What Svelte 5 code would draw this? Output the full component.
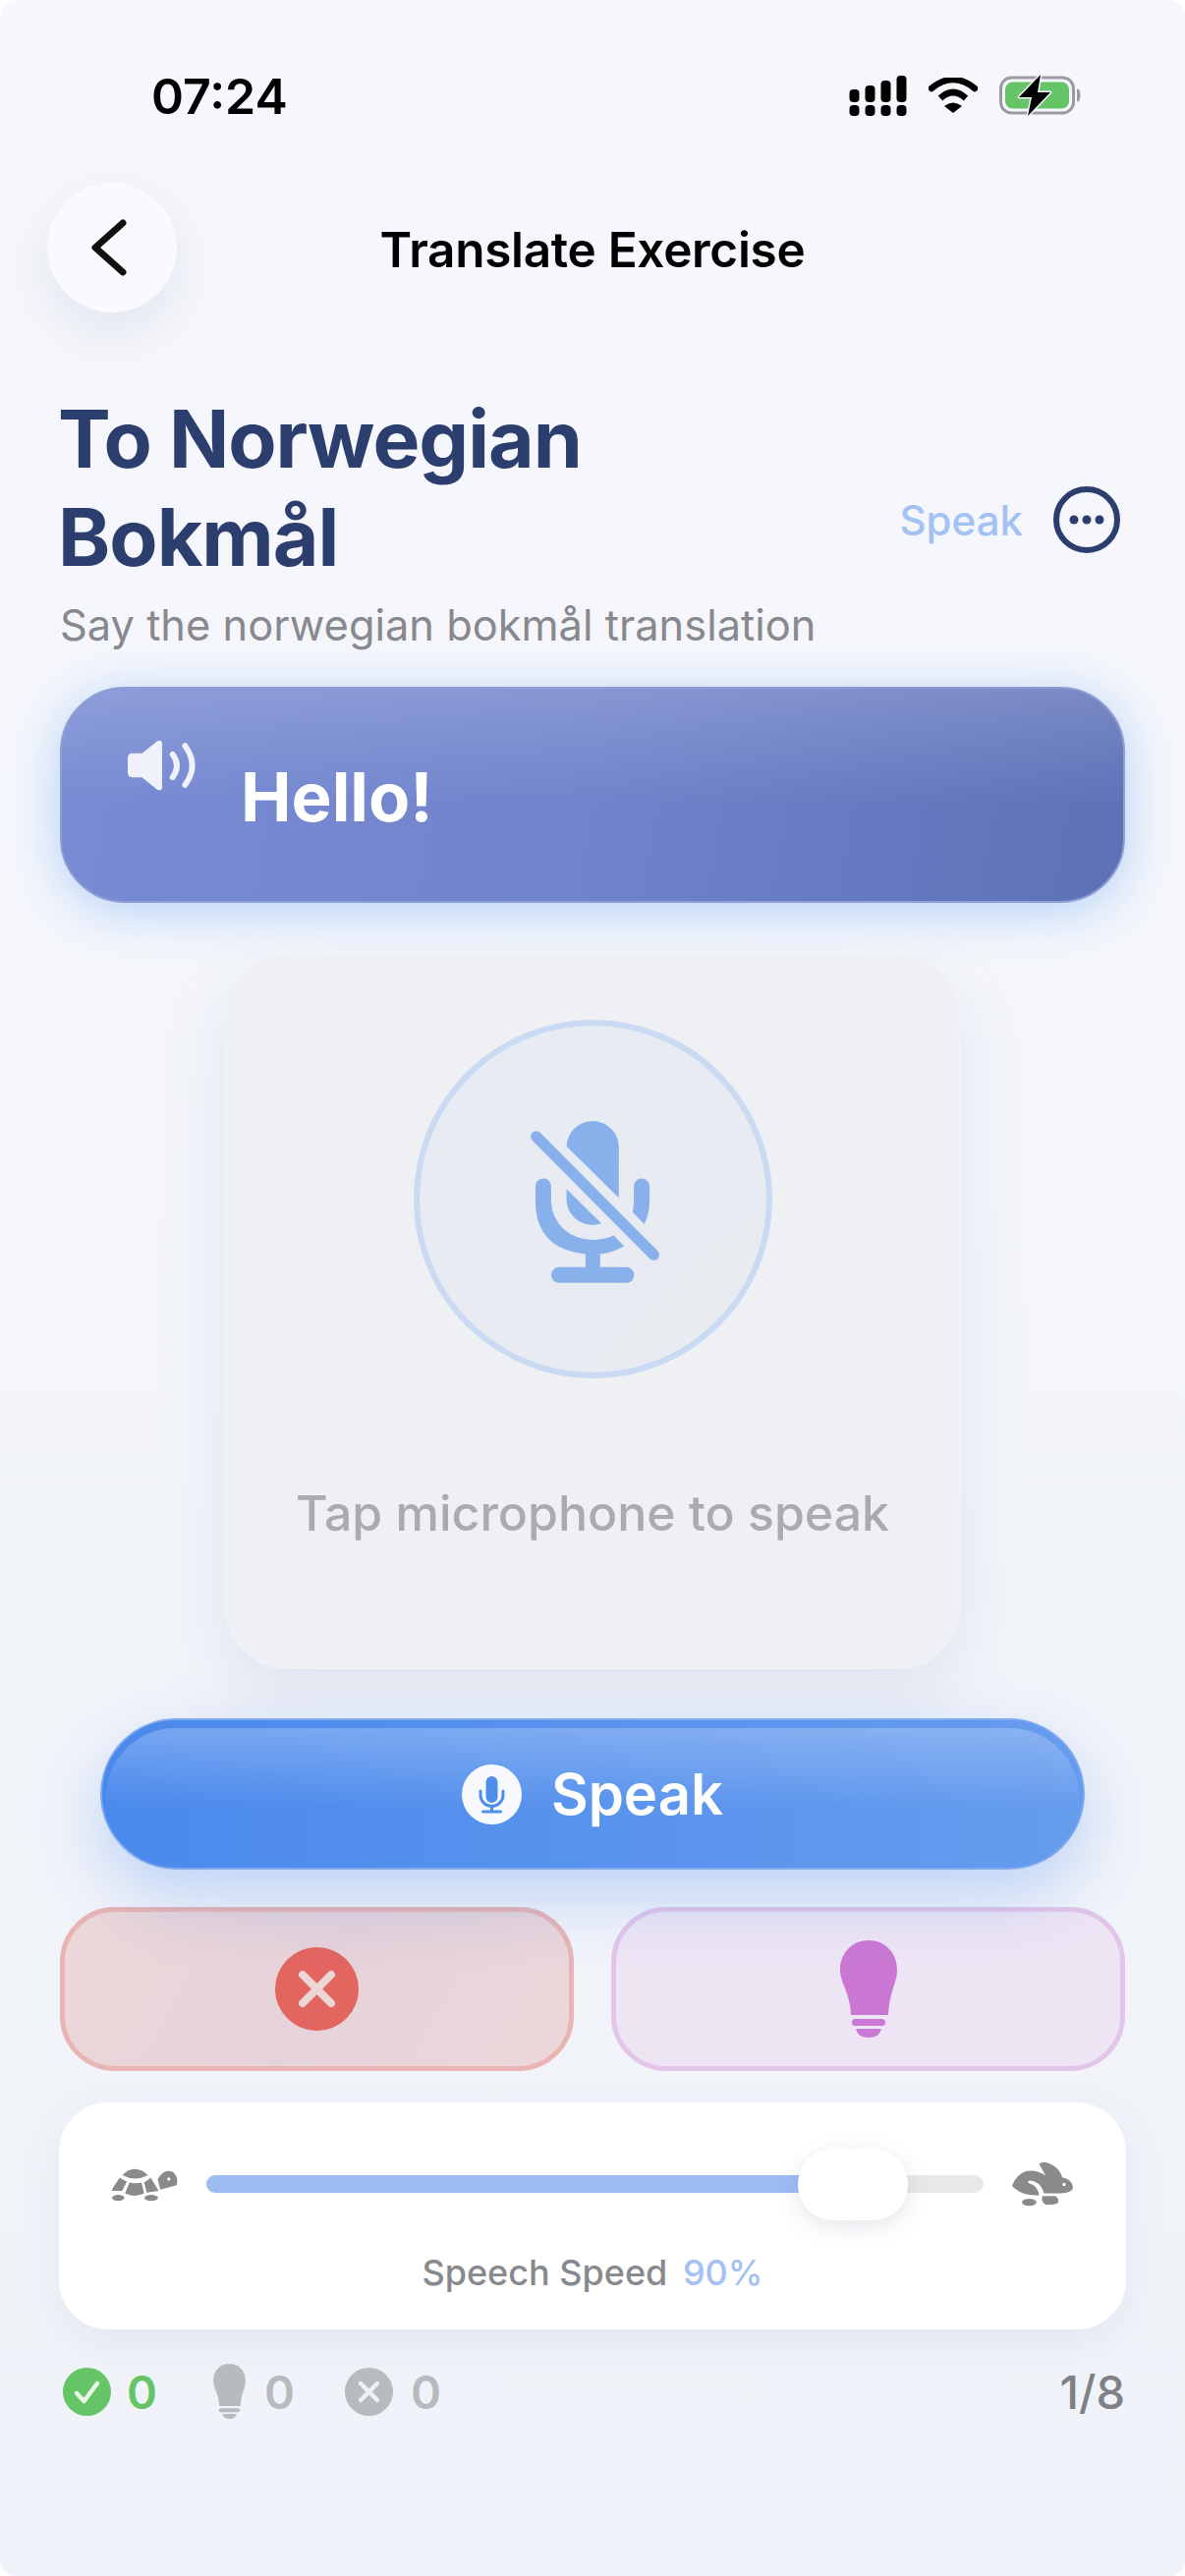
<script lang="ts">
	let speed = $state(90);
	const signalBars = [
		{ x: 0, y: 14, h: 13 },
		{ x: 16, y: 10, h: 17 },
		{ x: 32, y: 5, h: 22 },
		{ x: 48, y: 0, h: 27 }
	];
</script>

<div class="page">
	<div class="statusbar">
		<span class="time">07:24</span>
		<div class="status-icons">
			<svg width="59" height="41" viewBox="0 0 59 41" fill="#000">
				{#each signalBars as b}
					<rect x={b.x + 0.5} y={b.y} width="10" height={b.h} rx="4" />
					<rect x={b.x + 0.5} y="30" width="10" height="11" rx="4" />
				{/each}
			</svg>
			<svg width="50" height="37" viewBox="0 0 50 37">
				<path d="M3 11 Q25 -7 47 11" fill="none" stroke="#000" stroke-width="6.5" stroke-linecap="round" stroke-linejoin="round" />
				<path d="M12 21 Q25 9 38 21" fill="none" stroke="#000" stroke-width="6.5" />
				<path d="M25 36 L16 29 Q25 22 34 29 Z" fill="#000" />
			</svg>
			<svg width="83" height="42" viewBox="0 0 83 42">
				<rect x="1.5" y="3" width="74" height="36" rx="11" fill="none" stroke="#9a9a9f" stroke-width="3" />
				<rect x="6" y="7.5" width="65" height="27" rx="7.5" fill="#65c466" />
				<path d="M80 15 Q83 21 80 27 Z" fill="#9a9a9f" stroke="#9a9a9f" stroke-width="2" />
				<path d="M42 0 L20 23 H33 L29 42 L52 18 H39 Z" fill="#000" stroke="#f5f6fc" stroke-width="3" stroke-linejoin="round" paint-order="stroke" />
			</svg>
		</div>
	</div>

	<header class="topbar">
		<button class="back" aria-label="Back">
			<svg width="41" height="60" viewBox="0 0 41 60">
				<path d="M35 5 L7 30 L35 55" fill="none" stroke="#111" stroke-width="7" stroke-linecap="round" stroke-linejoin="round" />
			</svg>
		</button>
		<h1>Translate Exercise</h1>
	</header>

	<main class="content">
		<div class="title-row">
			<h2>To Norwegian<br />Bokmål</h2>
			<div class="title-actions">
				<span class="speak-link">Speak</span>
				<svg width="68" height="68" viewBox="0 0 68 68">
					<circle cx="34" cy="34" r="31" fill="none" stroke="#2c3e6d" stroke-width="6" />
					<circle cx="21" cy="34" r="4.5" fill="#2c3e6d" />
					<circle cx="34" cy="34" r="4.5" fill="#2c3e6d" />
					<circle cx="47" cy="34" r="4.5" fill="#2c3e6d" />
				</svg>
			</div>
		</div>
		<p class="subtitle">Say the norwegian bokmål translation</p>

		<div class="prompt">
			<svg class="speaker" width="70" height="53" viewBox="0 0 72 54" fill="#f0f2fb">
				<path d="M6 14 H16 L32 1 Q37 -1 37 4 V49 Q37 54 32 52 L16 39 H6 Q1 39 1 34 V19 Q1 14 6 14 Z" />
				<path d="M48 15 Q57 27 48 39" fill="none" stroke="#f0f2fb" stroke-width="6" stroke-linecap="round" />
				<path d="M61 6 Q76 27 61 47" fill="none" stroke="#f0f2fb" stroke-width="6" stroke-linecap="round" />
			</svg>
			<span class="prompt-text">Hello!</span>
		</div>

		<section class="mic-card">
			<div class="mic-circle">
				<svg width="133" height="166" viewBox="480 420 400 498" fill="#88b1ec">
					<path d="M590 497 A80 80 0 0 1 750 502 V655 Z" />
					<path d="M590 628 V660 A80 78 0 0 0 697 733 Z" />
					<path d="M495 619 A24 24 0 0 1 543 619 V665 A125 118 0 0 0 670 783 Q705 783 734 770 L766 802 Q735 822 693 827 V867 H773 A24 24 0 0 1 773 915 H567 A24 24 0 0 1 567 867 H648 V827 Q495 810 495 665 Z" />
					<path d="M796 619 A24 24 0 0 1 844 619 V665 Q844 702 828 735 L792 698 Q796 682 796 665 Z" />
					<line x1="497" y1="467" x2="857" y2="829" stroke="#88b1ec" stroke-width="34" stroke-linecap="round" />
				</svg>
			</div>
			<p class="mic-hint">Tap microphone to speak</p>
		</section>

		<button class="speak-btn">
			<svg width="61" height="61" viewBox="0 0 61 61">
				<circle cx="30.5" cy="30.5" r="30.5" fill="#f7f9fe" />
				<rect x="24.5" y="12" width="12" height="27" rx="6" fill="#4f8dea" />
				<path d="M19 27 V31 A11.5 11.5 0 0 0 42 31 V27" fill="none" stroke="#4f8dea" stroke-width="3" stroke-linecap="round" />
				<path d="M30.5 42 V47 M21.5 48 H39.5" fill="none" stroke="#4f8dea" stroke-width="3" stroke-linecap="round" />
			</svg>
			<span>Speak</span>
		</button>

		<div class="actions">
			<button class="action wrong" aria-label="Skip">
				<svg width="85" height="85" viewBox="0 0 85 85">
					<circle cx="42.5" cy="42.5" r="42.5" fill="#e2655f" />
					<path d="M28 28 L57 57 M57 28 L28 57" stroke="#ecd6d8" stroke-width="8" stroke-linecap="round" />
				</svg>
			</button>
			<button class="action hint" aria-label="Hint">
				<svg width="58" height="99" viewBox="0 0 58 99" fill="#cb78d4">
					<path d="M29 0 C46 0 58 13 58 30 C58 44 50 52 49 76 H11 C10 52 0 44 0 30 C0 13 12 0 29 0 Z" />
					<rect x="12" y="80" width="34" height="7" rx="3.5" />
					<path d="M16 90 H42 Q40 99 29 99 Q18 99 16 90 Z" />
				</svg>
			</button>
		</div>

		<section class="speed-card">
			<div class="speed-row">
				<svg class="turtle" width="68" height="35" viewBox="98 103 206 106" fill="#8a8a8d">
					<path d="M133 127 Q170 90 212 127 Q172 148 133 127 Z" />
					<path d="M125 135 Q135 142 147 147 L132 176 H100 Q100 170 125 135 Z" />
					<path d="M155 150 Q172 155 192 150 L200 183 Q170 198 141 183 Z" />
					<path d="M220 135 L245 176 L208 181 L200 149 Q212 144 220 135 Z" />
					<path d="M242 140 Q260 108 285 116 Q308 130 300 158 L250 172 Z" />
					<ellipse cx="120" cy="197" rx="19" ry="9" />
					<ellipse cx="222" cy="197" rx="21" ry="9" />
					<circle cx="276" cy="139" r="5" fill="#fff" />
				</svg>
				<div class="track">
					<div class="track-fill" style="width: {speed}%"></div>
					<div class="thumb" style="left: {speed}%"></div>
				</div>
				<svg class="rabbit" width="62" height="45" viewBox="153 88 185 134" fill="#8a8a8d">
					<path d="M153 160 Q165 125 195 115 Q225 108 255 128 L235 92 Q250 82 275 95 Q300 110 305 133 Q338 140 338 165 Q335 182 300 182 H250 Q240 145 205 143 Q195 150 215 155 Q232 165 235 188 Q190 190 165 170 Z" />
					<path d="M245 190 H285 Q298 200 292 212 Q280 218 255 216 Q240 208 245 190 Z" />
					<ellipse cx="205" cy="209" rx="22" ry="11" />
					<circle cx="311" cy="155" r="5" fill="#fff" />
				</svg>
			</div>
			<p class="speed-label">Speech Speed <span>{speed}%</span></p>
		</section>

		<footer class="stats">
			<div class="stat correct">
				<svg width="49" height="49" viewBox="0 0 49 49">
					<circle cx="24.5" cy="24.5" r="24.5" fill="#65c466" />
					<path d="M14 26 L21.5 34 L35 16" fill="none" stroke="#eaf6ea" stroke-width="4.5" stroke-linecap="round" stroke-linejoin="round" />
				</svg>
				<span>0</span>
			</div>
			<div class="stat muted bulb">
				<svg width="33" height="56" viewBox="0 0 58 99" fill="#b7babf">
					<path d="M29 0 C46 0 58 13 58 30 C58 44 50 52 49 76 H11 C10 52 0 44 0 30 C0 13 12 0 29 0 Z" />
					<rect x="10" y="80" width="38" height="7" rx="3.5" />
					<path d="M16 90 H42 Q40 99 29 99 Q18 99 16 90 Z" />
				</svg>
				<span>0</span>
			</div>
			<div class="stat muted cross">
				<svg width="49" height="49" viewBox="0 0 49 49">
					<circle cx="24.5" cy="24.5" r="24.5" fill="#b7babf" />
					<path d="M16 16 L33 33 M33 16 L16 33" stroke="#eef0f5" stroke-width="4.5" stroke-linecap="round" />
				</svg>
				<span>0</span>
			</div>
			<span class="progress">1/8</span>
		</footer>
	</main>
</div>

<style>
	:global(body) {
		margin: 0;
		background: #fff;
	}

	.page {
		width: 1206px;
		height: 2622px;
		overflow: hidden;
		border-radius: 16px;
		background: linear-gradient(180deg, #f6f7fc 0%, #f4f6fb 45%, #eff2f8 100%);
		font-family: Inter, 'Noto Sans', sans-serif;
	}

	.statusbar {
		display: flex;
		justify-content: space-between;
		align-items: flex-start;
		height: 186px;
		box-sizing: border-box;
		padding: 71px 106px 0 154px;
	}

	.time {
		font-size: 50px;
		line-height: 54px;
		font-weight: 600;
		color: #000;
	}

	.status-icons {
		display: flex;
		align-items: center;
		gap: 22px;
		margin-top: 5px;
	}

	.topbar {
		display: grid;
		grid-template-columns: 132px 1fr 132px;
		align-items: center;
		padding: 0 48px;
		height: 132px;
	}

	.back {
		width: 132px;
		height: 132px;
		display: flex;
		align-items: center;
		justify-content: center;
		padding: 0 8px 0 0;
		border: none;
		border-radius: 50%;
		background: #f9fafe;
		box-shadow: 0 20px 50px rgba(120, 130, 160, 0.14);
	}

	h1 {
		margin: 3px 0 0;
		text-align: center;
		font-size: 49.5px;
		font-weight: 600;
		color: #000;
		letter-spacing: -0.3px;
	}

	.content {
		padding: 79px 61px 0;
	}

	.title-row {
		display: flex;
		justify-content: space-between;
		align-items: flex-end;
	}

	h2 {
		margin: 0 0 0 -2px;
		font-size: 80.5px;
		line-height: 100px;
		font-weight: 700;
		color: #2c3e6d;
		letter-spacing: -1px;
	}

	.title-actions {
		display: flex;
		align-items: center;
		gap: 31px;
		margin: 0 5px 34px 0;
	}

	.speak-link {
		font-size: 42px;
		font-weight: 500;
		color: #a4c1f4;
	}

	.subtitle {
		margin: 9px 0 0;
		font-size: 43.4px;
		line-height: 60px;
		color: #88898e;
	}

	.prompt {
		display: flex;
		align-items: center;
		height: 220px;
		margin-top: 33px;
		box-sizing: border-box;
		padding-top: 4px;
		border: 2px solid #8f9dd6;
		border-radius: 66px;
		background-color: #6d80c6;
		background-image:
			linear-gradient(180deg, rgba(255, 255, 255, 0.16) 0%, rgba(255, 255, 255, 0) 55%),
			linear-gradient(100deg, #788bd3 0%, #7083cb 50%, #5d71b7 100%);
		box-shadow: 0 8px 50px rgba(100, 165, 245, 0.45);
	}

	.speaker {
		align-self: flex-start;
		margin: 48px 0 0 66px;
	}

	.prompt-text {
		margin-left: 46px;
		font-size: 69px;
		font-weight: 700;
		color: #fff;
	}

	.mic-card {
		display: flex;
		flex-direction: column;
		align-items: center;
		width: 750px;
		height: 730px;
		margin: 50px auto 0;
		box-sizing: border-box;
		padding-top: 67px;
		border: 2px solid #f0f2f7;
		border-radius: 66px;
		background: #eff0f3;
		box-shadow: 0 30px 70px rgba(110, 135, 180, 0.14);
	}

	.mic-circle {
		display: flex;
		align-items: center;
		justify-content: center;
		width: 365px;
		height: 365px;
		box-sizing: border-box;
		border: 6px solid #c9daf2;
		border-radius: 50%;
		background: linear-gradient(135deg, #e7ebf3, #e8ebf0);
	}

	.mic-circle svg {
		margin: 6px 0 0 6px;
	}

	.mic-hint {
		margin: 107px 0 0;
		font-size: 50px;
		line-height: 60px;
		font-weight: 500;
		color: #a9abb0;
	}

	.speak-btn {
		position: relative;
		display: flex;
		align-items: center;
		justify-content: center;
		gap: 30px;
		width: 1002px;
		height: 154px;
		margin: 50px 0 0 41px;
		padding: 0;
		overflow: hidden;
		border: 2px solid #7eaaf0;
		border-radius: 77px;
		background: linear-gradient(90deg, #4a89ec 0%, #669cee 100%);
		box-shadow: 0 26px 70px rgba(74, 137, 236, 0.32);
		font-family: inherit;
		font-size: 58px;
		font-weight: 600;
		color: #fff;
	}

	/* glossy band along the top of the button */
	.speak-btn::before {
		content: '';
		position: absolute;
		inset: 8px 4px 40% 4px;
		border-radius: 70px 70px 0 0;
		background: linear-gradient(180deg, rgba(255, 255, 255, 0.24), rgba(255, 255, 255, 0));
	}

	.speak-btn svg,
	.speak-btn span {
		position: relative;
	}

	.actions {
		display: grid;
		grid-template-columns: 1fr 1fr;
		gap: 38px;
		margin-top: 38px;
	}

	.action {
		display: flex;
		align-items: center;
		justify-content: center;
		height: 167px;
		padding: 0;
		border-radius: 56px;
		border: 5px solid;
	}

	.wrong {
		background: linear-gradient(120deg, #edd7d9 0%, #e6d2da 50%, #ecd7da 100%);
		border-color: #e8b4b4;
	}

	.hint {
		background: #eee5f4;
		border-color: #e3c5ea;
	}

	.speed-card {
		height: 231px;
		margin: 32px -1px 0;
		border-radius: 50px;
		background: #fff;
		box-shadow: 0 14px 40px rgba(120, 135, 170, 0.1);
	}

	.speed-row {
		display: flex;
		align-items: center;
		height: 74px;
		padding: 46px 54px 0 53px;
	}

	.track {
		position: relative;
		flex: 1;
		height: 18px;
		margin: 0 29px;
		border-radius: 9px;
		background: #e8e8e8;
	}

	.track-fill {
		height: 100%;
		border-radius: 9px 0 0 9px;
		background: #9dbcf2;
	}

	.thumb {
		position: absolute;
		top: -27px;
		width: 112px;
		height: 73px;
		margin-left: -110px;
		border-radius: 36px;
		background: #fff;
		box-shadow: 0 6px 24px rgba(90, 100, 130, 0.16);
	}

	.speed-label {
		margin: 31px 0 0;
		text-align: center;
		font-size: 36px;
		line-height: 44px;
		font-weight: 500;
		color: #88898e;
	}

	.speed-label span {
		margin-left: 6px;
		color: #a4c1f4;
	}

	.stats {
		display: flex;
		align-items: center;
		margin-top: 35px;
		padding-left: 3px;
		height: 56px;
		font-size: 47px;
		font-weight: 600;
	}

	.stat {
		display: flex;
		align-items: center;
		gap: 16px;
	}

	.correct {
		color: #65c466;
	}

	.muted {
		color: #b7babf;
	}

	.bulb {
		margin-left: 57px;
		gap: 19px;
	}

	.cross {
		margin-left: 51px;
		gap: 18px;
	}

	.progress {
		margin-left: auto;
		font-weight: 500;
		color: #808187;
	}
</style>
